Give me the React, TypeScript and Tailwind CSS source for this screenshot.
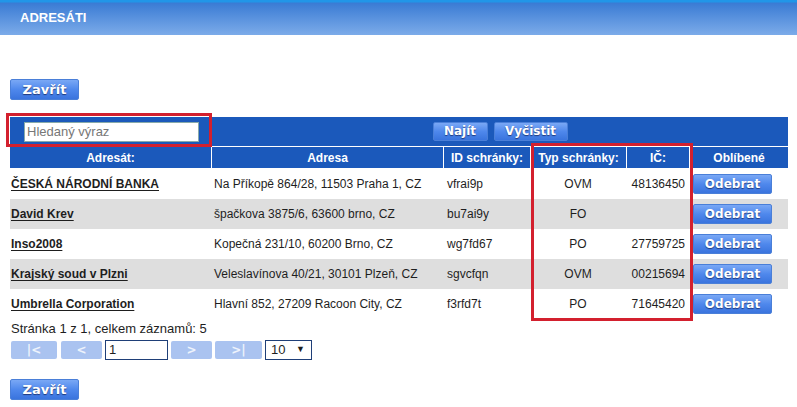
import React from "react";

const cols = "grid grid-cols-[201px_232px_87px_96px_63px_99px]";

function BlueBtn({ children, className = "" }: { children: React.ReactNode; className?: string }) {
  return (
    <div
      className={
        "flex items-center justify-center rounded-[2px] border border-[#4a7fd8] bg-linear-to-b from-[#7aa8f5] via-[#4f88ec] to-[#3a74de] font-['DejaVu_Sans',Verdana,sans-serif] text-[12px] font-bold text-white [text-shadow:0_1px_1px_rgba(0,0,40,0.55)] " +
        className
      }
    >
      {children}
    </div>
  );
}

function PgBtn({ children, className = "" }: { children: React.ReactNode; className?: string }) {
  return (
    <div
      className={
        "flex h-[18px] items-center justify-center rounded-[2px] bg-[#aac3f0] font-['DejaVu_Sans',Verdana,sans-serif] text-[12px] font-bold text-[#eef3fc] " +
        className
      }
    >
      {children}
    </div>
  );
}

const rows = [
  { name: "ČESKÁ NÁRODNÍ BANKA", addr: "Na Příkopě 864/28, 11503 Praha 1, CZ", id: "vfrai9p", typ: "OVM", ic: "48136450" },
  { name: "David Krev", addr: "špačkova 3875/6, 63600 brno, CZ", id: "bu7ai9y", typ: "FO", ic: "" },
  { name: "Inso2008", addr: "Kopečná 231/10, 60200 Brno, CZ", id: "wg7fd67", typ: "PO", ic: "27759725" },
  { name: "Krajský soud v Plzni", addr: "Veleslavínova 40/21, 30101 Plzeň, CZ", id: "sgvcfqn", typ: "OVM", ic: "00215694" },
  { name: "Umbrella Corporation", addr: "Hlavní 852, 27209 Racoon City, CZ", id: "f3rfd7t", typ: "PO", ic: "71645420" },
];

export default function App() {
  return (
    <div className="relative h-[407px] w-[797px] overflow-hidden bg-white font-['Liberation_Sans',Arial,sans-serif] text-[12px] text-[#1e1e1e]">
      {/* title bar */}
      <div className="flex h-[35px] items-center bg-[linear-gradient(to_bottom,#2196e8_0px,#2196e8_2px,#3a7bd4_3px,#7cabe9_35px)] pl-[20px] pt-[1px]">
        <span className="text-[13px] font-bold text-white">ADRESÁTI</span>
      </div>

      <div className="ml-[10px] mt-[44px]">
        <BlueBtn className="h-[21px] w-[69px] text-[13px]">Zavřít</BlueBtn>
      </div>

      {/* table */}
      <div className="ml-[10px] mt-[17px] w-[778px]">
        <div className="flex h-[29px] bg-[#1b59bb]">
          <div className="flex w-[201px] items-center pl-[14px]">
            <div className="flex h-[20px] w-[175px] items-center border border-[#8aa] bg-white pl-[2px] text-[13px] text-[#777]">
              Hledaný výraz
            </div>
          </div>
          <div className="flex flex-1 items-center justify-center gap-[6px] border-l border-white pb-[1px]">
            <BlueBtn className="h-[19px] w-[55px]">Najít</BlueBtn>
            <BlueBtn className="h-[19px] w-[74px]">Vyčistit</BlueBtn>
          </div>
        </div>
        <div className={cols + " mt-px h-[21px] bg-[#1b59bb] font-bold text-white"}>
          <div className="flex items-center justify-center">Adresát:</div>
          <div className="flex items-center justify-center border-l border-white">Adresa</div>
          <div className="flex items-center justify-center border-l border-white">ID schránky:</div>
          <div className="flex items-center justify-center border-l border-white">Typ schránky:</div>
          <div className="flex items-center justify-center border-l border-white">IČ:</div>
          <div className="flex items-center justify-center border-l border-white">Oblíbené</div>
        </div>
        <div className="mt-px">
          {rows.map((r, i) => (
            <div key={i} className={cols + " h-[30px] " + (i % 2 === 1 ? "bg-[#dedede]" : "bg-white")}>
              <div className="flex items-center pl-[1px] font-bold underline underline-offset-[2px]">{r.name}</div>
              <div className="flex items-center pl-[3px]">{r.addr}</div>
              <div className="flex items-center pl-[4px]">{r.id}</div>
              <div className="flex items-center justify-center">{r.typ}</div>
              <div className="flex items-center justify-end pr-[4px]">{r.ic}</div>
              <div className="flex items-center pl-[4px]">
                <BlueBtn className="h-[20px] w-[79px]">Odebrat</BlueBtn>
              </div>
            </div>
          ))}
        </div>
      </div>

      {/* pagination */}
      <div className="ml-[11px] mt-[2px] text-[13px] leading-[15px]">Stránka 1 z 1, celkem záznamů: 5</div>
      <div className="ml-[11px] mt-[4px] flex h-[20px] items-center">
        <PgBtn className="w-[46px]">|&lt;</PgBtn>
        <PgBtn className="ml-[4px] w-[41px]">&lt;</PgBtn>
        <div className="ml-[3px] flex h-[20px] w-[63px] items-center border border-[#1f3f78] bg-white pl-[3px] text-[13px]">1</div>
        <PgBtn className="ml-[3px] w-[41px]">&gt;</PgBtn>
        <PgBtn className="ml-[3px] w-[47px]">&gt;|</PgBtn>
        <div className="ml-[3px] flex h-[20px] w-[47px] items-center justify-between border border-[#1f3f78] bg-white pl-[5px] pr-[6px] text-[13px]">
          <span>10</span>
          <span className="text-[9px]">▼</span>
        </div>
      </div>

      <div className="ml-[10px] mt-[19px]">
        <BlueBtn className="h-[21px] w-[69px] text-[13px]">Zavřít</BlueBtn>
      </div>

      {/* red highlight boxes */}
      <div className="absolute left-[6px] top-[113px] h-[34px] w-[206px] border-[3px] border-[#d3202e]" />
      <div className="absolute left-[531px] top-[143px] h-[178px] w-[162px] border-[3px] border-[#d3202e]" />
    </div>
  );
}
